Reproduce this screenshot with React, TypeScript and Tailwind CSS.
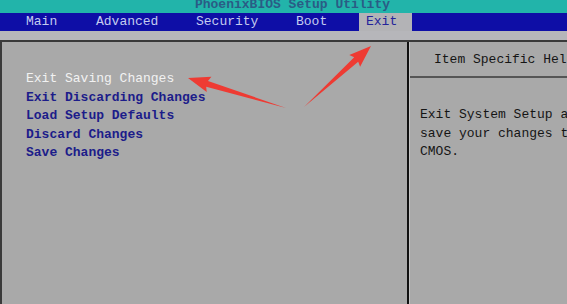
import React from "react";

const menuTabs = [
  { label: "Main", width: "w-[70px]" },
  { label: "Advanced", width: "w-[100px]" },
  { label: "Security", width: "w-[100px]" },
  { label: "Boot", width: "w-[70px]" },
];

const exitItems = [
  "Exit Saving Changes",
  "Exit Discarding Changes",
  "Load Setup Defaults",
  "Discard Changes",
  "Save Changes",
];

// red annotation arrow: tapered shaft + triangular head
function arrowPoints(tx: number, ty: number, hx: number, hy: number) {
  const dx = hx - tx;
  const dy = hy - ty;
  const len = Math.hypot(dx, dy);
  const ux = dx / len;
  const uy = dy / len;
  const nx = -uy;
  const ny = ux;
  const headLen = 20;
  const headW = 8;
  const shaftW = 3;
  const bx = hx - ux * headLen;
  const by = hy - uy * headLen;
  const pts = [
    [tx, ty],
    [bx + nx * shaftW, by + ny * shaftW],
    [bx + nx * headW - ux * 2, by + ny * headW - uy * 2],
    [hx, hy],
    [bx - nx * headW - ux * 2, by - ny * headW - uy * 2],
    [bx - nx * shaftW, by - ny * shaftW],
  ];
  return pts.map((p) => p.map((v) => v.toFixed(1)).join(",")).join(" ");
}

export default function App() {
  return (
    <div className="relative w-[567px] h-[304px] overflow-hidden bg-[#a9a9a9] font-['Liberation_Mono',monospace] text-[13px] font-bold">
      <div className="h-[13px] bg-[#22b4aa] overflow-hidden flex justify-center">
        <span className="-mt-[3px] leading-[16px] text-[#2a5c86] pl-[18px]">PhoenixBIOS Setup Utility</span>
      </div>

      <div className="h-[18px] bg-[#0e0ea6] flex items-center pl-[19px] leading-[18px]">
        {menuTabs.map((tab) => (
          <div key={tab.label} className={`${tab.width} px-[7px] text-[#c4cbef] font-normal`}>
            {tab.label}
          </div>
        ))}
        <div className="w-[53px] h-full px-[7px] bg-[#b3b3b6] text-[#23239a] font-normal">Exit</div>
      </div>

      <div className="h-[9px] bg-[#b6b6ba]" />

      <div className="flex h-[264px] border-t-2 border-l-2 border-[#3a3a3a]">
        <div className="w-[407px] pt-[28px] pl-[24px] leading-[18.5px] border-r-2 border-[#111]">
          {exitItems.map((item, i) => (
            <div key={item} className={i === 0 ? "text-[#f2f2f2] font-normal" : "text-[#1c1c8a]"}>
              {item}
            </div>
          ))}
        </div>
        <div className="flex-1 border-l border-[#c4c4c4] font-normal text-[#151515] whitespace-nowrap overflow-hidden">
          <div className="h-[36px] flex items-center pt-[2px] pl-[24px] border-b-2 border-[#555]">Item Specific Help</div>
          <div className="pt-[28px] pl-[10px] leading-[18.5px]">
            <div>Exit System Setup and</div>
            <div>save your changes to</div>
            <div>CMOS.</div>
          </div>
        </div>
      </div>

      <svg className="absolute inset-0 pointer-events-none" width="567" height="304">
        <polygon points={arrowPoints(286, 108, 188, 78)} fill="#ee3b33" />
        <polygon points={arrowPoints(304, 107, 371, 46)} fill="#ee3b33" />
      </svg>
    </div>
  );
}
